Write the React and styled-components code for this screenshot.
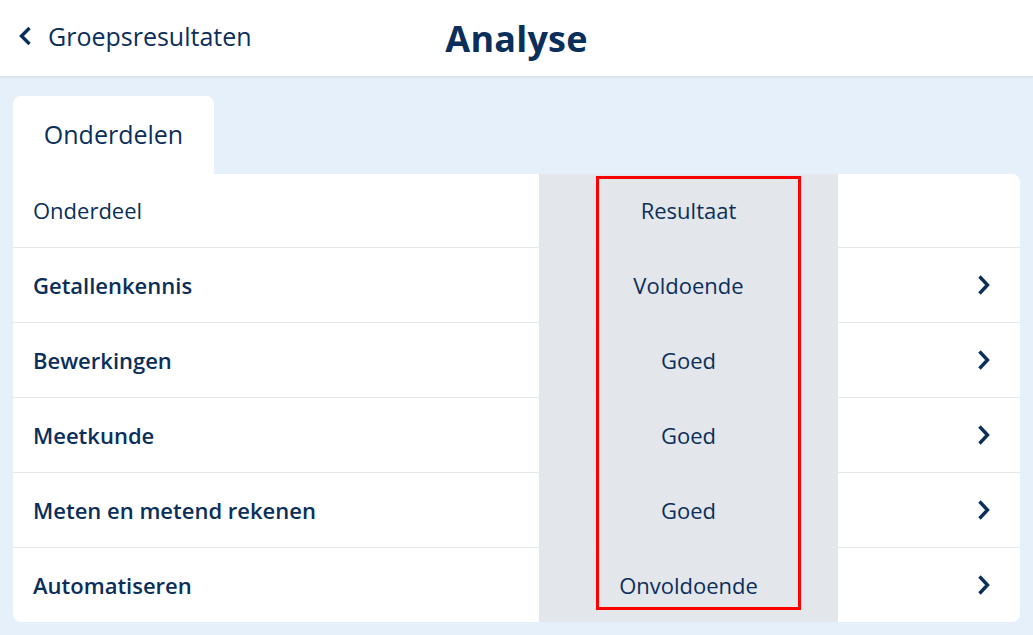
import styled, { createGlobalStyle } from "styled-components";

const rows = [
  { name: "Getallenkennis", result: "Voldoende" },
  { name: "Bewerkingen", result: "Goed" },
  { name: "Meetkunde", result: "Goed" },
  { name: "Meten en metend rekenen", result: "Goed" },
  { name: "Automatiseren", result: "Onvoldoende" },
];

export default function App() {
  return (
    <>
      <GlobalStyle />
      <Header>
        <BackLink>
          <svg width="14" height="22" viewBox="0 0 14 22">
            <path d="M11.5 3 L3.5 11 L11.5 19" fill="none" stroke="#0b2f5b" strokeWidth="3.4" />
          </svg>
          Groepsresultaten
        </BackLink>
        <Title>Analyse</Title>
        <span />
      </Header>
      <Content>
        <Tab>Onderdelen</Tab>
        <Arrow width="40" height="54" viewBox="0 0 40 54">
          <line x1="2" y1="2" x2="24" y2="38" stroke="#ff0000" strokeWidth="2.5" />
          <polygon points="17,37 28,46 28,32" fill="#ff0000" />
        </Arrow>
        <Table>
          <HeadRow>
            <Cell>Onderdeel</Cell>
            <ResultCell>Resultaat</ResultCell>
            <Cell />
          </HeadRow>
          {rows.map((r) => (
            <Row key={r.name}>
              <NameCell>{r.name}</NameCell>
              <ResultCell>{r.result}</ResultCell>
              <ChevronCell>
                <svg width="14" height="22" viewBox="0 0 14 22">
                  <path d="M2.5 2.5 L10.5 11 L2.5 19.5" fill="none" stroke="#0b2f5b" strokeWidth="3.4" />
                </svg>
              </ChevronCell>
            </Row>
          ))}
          <Highlight />
        </Table>
      </Content>
    </>
  );
}

const GlobalStyle = createGlobalStyle`
  body {
    margin: 0;
    background: #e6f0fa;
    font-family: "Open Sans", "Liberation Sans", sans-serif;
    color: #0b2f5b;
  }
`;

const Header = styled.header`
  height: 76px;
  background: #ffffff;
  border-bottom: 1px solid #d9e2ea;
  box-shadow: 0 1px 2px rgba(0, 0, 0, 0.05);
  display: grid;
  grid-template-columns: 1fr auto 1fr;
  align-items: center;
`;

const BackLink = styled.div`
  display: flex;
  align-items: center;
  gap: 16px;
  padding-left: 18px;
  font-size: 25px;
  padding-bottom: 4px;
  cursor: pointer;
`;

const Title = styled.h1`
  margin: 0;
  font-size: 36px;
  font-weight: 700;
  letter-spacing: 0.2px;
`;

const Content = styled.main`
  position: relative;
  padding: 19px 13px 14px;
`;

const Tab = styled.div`
  width: 201px;
  height: 78px;
  background: #ffffff;
  border-radius: 8px 8px 0 0;
  display: flex;
  align-items: center;
  justify-content: center;
  font-size: 25px;
  padding-bottom: 2px;
  box-sizing: border-box;
`;

const Arrow = styled.svg`
  position: absolute;
  left: 592px;
  top: 124px;
`;

const Table = styled.section`
  position: relative;
  background: #ffffff;
  border-radius: 0 8px 8px 8px;
  overflow: hidden;
`;

const Row = styled.div`
  display: grid;
  grid-template-columns: 526px 299px 1fr;
  height: 74px;
  border-top: 1px solid rgba(20, 45, 80, 0.11);
`;

const HeadRow = styled(Row)`
  height: 73px;
  border-top: none;
`;

const Cell = styled.div`
  display: flex;
  align-items: center;
  padding-left: 20px;
  font-size: 22px;
  padding-bottom: 1px;
`;

const NameCell = styled(Cell)`
  font-weight: 600;
`;

const ResultCell = styled.div`
  display: flex;
  align-items: center;
  justify-content: center;
  background: #e3e6ea;
  font-size: 22px;
  padding-bottom: 1px;
`;

const ChevronCell = styled.div`
  display: flex;
  align-items: center;
  justify-content: flex-end;
  padding-right: 29px;
`;

const Highlight = styled.div`
  position: absolute;
  left: 583px;
  top: 2px;
  width: 205px;
  height: 434px;
  border: 3px solid #ff0000;
  box-sizing: border-box;
  pointer-events: none;
`;
